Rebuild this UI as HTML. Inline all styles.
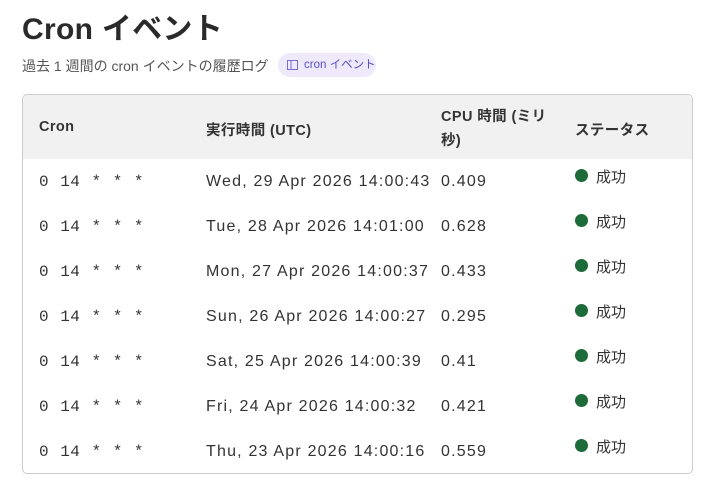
<!DOCTYPE html>
<html><head><meta charset="utf-8"><style>
body{margin:0;width:720px;height:480px;background:#fff;font-family:"Liberation Sans","Noto Sans CJK JP",sans-serif;color:#222;overflow:hidden;position:relative}
h1{position:absolute;left:22px;top:4px;margin:0;font-size:30px;font-weight:bold;color:#2a2a2a;letter-spacing:0.3px}
.sub{position:absolute;left:22px;top:56px;font-size:14px;color:#555}
.badge{position:absolute;left:278px;top:53px;width:98px;height:24px;border-radius:12px;background:#eeeafc;color:#5a4fc0;font-size:11.5px;line-height:24px;white-space:nowrap}
.badge span{position:absolute;left:26px}
.tbl{position:absolute;left:22px;top:94px;width:669px;height:378px;border:1px solid #ccc;border-radius:5px;overflow:hidden}
.hd{position:absolute;left:0;top:0;width:100%;height:64px;background:#f1f1f1;font-size:14.5px;font-weight:bold;color:#333;letter-spacing:0.4px}
.c{position:absolute;white-space:nowrap}
.row{position:absolute;left:0;width:100%;height:45px;font-size:16px;letter-spacing:1.2px;color:#333}
.mono{font-family:"Liberation Mono",monospace;font-size:16px;letter-spacing:0.5px;word-spacing:1px}
.dot{display:inline-block;width:13px;height:13px;border-radius:50%;background:#1e6b3a;vertical-align:0px;margin-right:8px}
.st{letter-spacing:0;font-size:15px}
</style></head><body>
<h1>Cron イベント</h1>
<div class="sub">過去 1 週間の cron イベントの履歴ログ</div>
<div class="badge"><svg style="position:absolute;left:9px;top:7px" width="11" height="10" viewBox="0 0 11 10"><rect x="0.5" y="0.5" width="10" height="9" fill="none" stroke="#7a6fd0"/><line x1="4" y1="0.5" x2="4" y2="9.5" stroke="#7a6fd0"/></svg><span>cron イベント</span></div>
<div class="tbl">
<div class="hd">
<div class="c" style="left:16px;top:24px">Cron</div>
<div class="c" style="left:183px;top:24px">実行時間 (UTC)</div>
<div class="c" style="left:418px;top:10px;line-height:24px">CPU 時間 (ミリ<br>秒)</div>
<div class="c" style="left:552px;top:24px">ステータス</div>
</div>
<div class="row" style="top:64px"><div class="c mono" style="left:16px;top:14px">0 14 * * *</div><div class="c" style="left:183px;top:14px">Wed, 29 Apr 2026 14:00:43</div><div class="c" style="left:418px;top:14px">0.409</div><div class="c st" style="left:552px;top:7px"><span class="dot"></span>成功</div></div>
<div class="row" style="top:109px"><div class="c mono" style="left:16px;top:14px">0 14 * * *</div><div class="c" style="left:183px;top:14px">Tue, 28 Apr 2026 14:01:00</div><div class="c" style="left:418px;top:14px">0.628</div><div class="c st" style="left:552px;top:7px"><span class="dot"></span>成功</div></div>
<div class="row" style="top:154px"><div class="c mono" style="left:16px;top:14px">0 14 * * *</div><div class="c" style="left:183px;top:14px">Mon, 27 Apr 2026 14:00:37</div><div class="c" style="left:418px;top:14px">0.433</div><div class="c st" style="left:552px;top:7px"><span class="dot"></span>成功</div></div>
<div class="row" style="top:199px"><div class="c mono" style="left:16px;top:14px">0 14 * * *</div><div class="c" style="left:183px;top:14px">Sun, 26 Apr 2026 14:00:27</div><div class="c" style="left:418px;top:14px">0.295</div><div class="c st" style="left:552px;top:7px"><span class="dot"></span>成功</div></div>
<div class="row" style="top:244px"><div class="c mono" style="left:16px;top:14px">0 14 * * *</div><div class="c" style="left:183px;top:14px">Sat, 25 Apr 2026 14:00:39</div><div class="c" style="left:418px;top:14px">0.41</div><div class="c st" style="left:552px;top:7px"><span class="dot"></span>成功</div></div>
<div class="row" style="top:289px"><div class="c mono" style="left:16px;top:14px">0 14 * * *</div><div class="c" style="left:183px;top:14px">Fri, 24 Apr 2026 14:00:32</div><div class="c" style="left:418px;top:14px">0.421</div><div class="c st" style="left:552px;top:7px"><span class="dot"></span>成功</div></div>
<div class="row" style="top:334px"><div class="c mono" style="left:16px;top:14px">0 14 * * *</div><div class="c" style="left:183px;top:14px">Thu, 23 Apr 2026 14:00:16</div><div class="c" style="left:418px;top:14px">0.559</div><div class="c st" style="left:552px;top:7px"><span class="dot"></span>成功</div></div>
</div>
</body></html>
